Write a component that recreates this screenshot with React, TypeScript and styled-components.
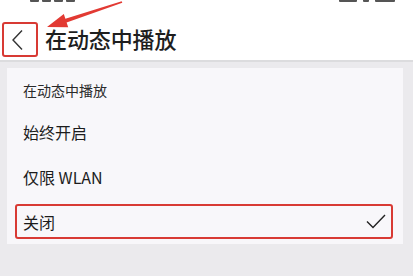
import React from "react";
import styled, { createGlobalStyle } from "styled-components";

const Global = createGlobalStyle`
  html, body { margin: 0; padding: 0; }
  body {
    width: 413px; height: 276px; overflow: hidden;
    background: #ebeaed;
    font-family: "Noto Sans CJK SC", "Noto Sans", sans-serif;
    color: #1c1c1c;
  }
`;

const Page = styled.div`
  position: relative;
  width: 413px;
  height: 276px;
  display: flex;
  flex-direction: column;
  background: #ebeaed;
  overflow: hidden;
`;

const StatusBar = styled.div`
  height: 4px;
  display: flex;
  align-items: flex-start;
  justify-content: space-between;
  padding: 0 18px 0 30px;
  background: #fff;
  overflow: hidden;
`;

const StatusTime = styled.div`
  display: flex;
  gap: 3px;
`;

const Blip = styled.span<{ $w: number }>`
  display: block;
  width: ${(p) => p.$w}px;
  height: 2px;
  background: #555;
  border-radius: 0 0 1px 1px;
`;

const StatusIcons = styled.div`
  display: flex;
  gap: 6px;
`;

const Header = styled.div`
  height: 58px;
  display: flex;
  align-items: flex-end;
  background: #fff;
  border-bottom: 2px solid #dcdcde;
  box-sizing: border-box;
  padding: 0 0 3px 2px;
`;

const BackBox = styled.div`
  width: 36px;
  height: 35px;
  box-sizing: border-box;
  border: 2.5px solid #d83a34;
  border-radius: 3px;
  display: flex;
  align-items: center;
  justify-content: center;
  padding-right: 4px;
`;

const Title = styled.div`
  margin-left: 7px;
  align-self: center;
  margin-top: 14px;
  font-size: 22px;
  font-weight: 500;
  letter-spacing: -0.1px;
  color: #1e1e1e;
  line-height: 1;
`;

const Card = styled.div`
  margin: 6px 10px 0 7px;
  background: #f8f7fa;
  display: flex;
  flex-direction: column;
`;

const SectionLabel = styled.div`
  height: 41px;
  box-sizing: border-box;
  padding: 14px 16px 0 16px;
  font-size: 14px;
  line-height: 16px;
  color: #2a2a2a;
`;

const Row = styled.div<{ $selected?: boolean }>`
  position: relative;
  height: 45px;
  display: flex;
  align-items: center;
  justify-content: space-between;
  padding: 0 17px 0 16px;
  font-size: 16px;
  color: #1c1c1c;
  ${(p) =>
    p.$selected &&
    `
    &::after {
      content: "";
      position: absolute;
      left: 8px;
      right: 10px;
      top: 5px;
      height: 35px;
      box-sizing: border-box;
      border: 2.5px solid #d83a34;
      border-radius: 3px;
      pointer-events: none;
    }
  `}
`;

const Arrow = styled.svg`
  position: absolute;
  left: 0;
  top: 0;
  pointer-events: none;
`;

const Chevron = () => (
  <svg width="14" height="22" viewBox="0 0 14 22">
    <polyline points="11,1.5 2,11 11,20.5" fill="none" stroke="#333" strokeWidth="1.4" />
  </svg>
);

const Check = () => (
  <svg width="20" height="15" viewBox="0 0 20 15">
    <polyline points="1,7.5 7,13.5 19,1" fill="none" stroke="#222" strokeWidth="1.4" />
  </svg>
);

export default function App() {
  return (
    <>
      <Global />
      <Page>
        <StatusBar>
          <StatusTime>
            <Blip $w={9} />
            <Blip $w={9} />
            <Blip $w={9} />
            <Blip $w={9} />
          </StatusTime>
          <StatusIcons>
            <Blip $w={18} />
            <Blip $w={6} />
            <Blip $w={20} />
          </StatusIcons>
        </StatusBar>
        <Header>
          <BackBox>
            <Chevron />
          </BackBox>
          <Title>在动态中播放</Title>
        </Header>
        <Card>
          <SectionLabel>在动态中播放</SectionLabel>
          <Row>始终开启</Row>
          <Row>仅限 WLAN</Row>
          <Row $selected>
            <span>关闭</span>
            <Check />
          </Row>
        </Card>
        <Arrow width="413" height="60" viewBox="0 0 413 60">
          <polygon
            points="47,27 63.8,14.1 65.4,18.8 121.7,1.2 122.3,2.8 66.6,22.6 68.2,27.3"
            fill="#e23a33"
          />
        </Arrow>
      </Page>
    </>
  );
}
